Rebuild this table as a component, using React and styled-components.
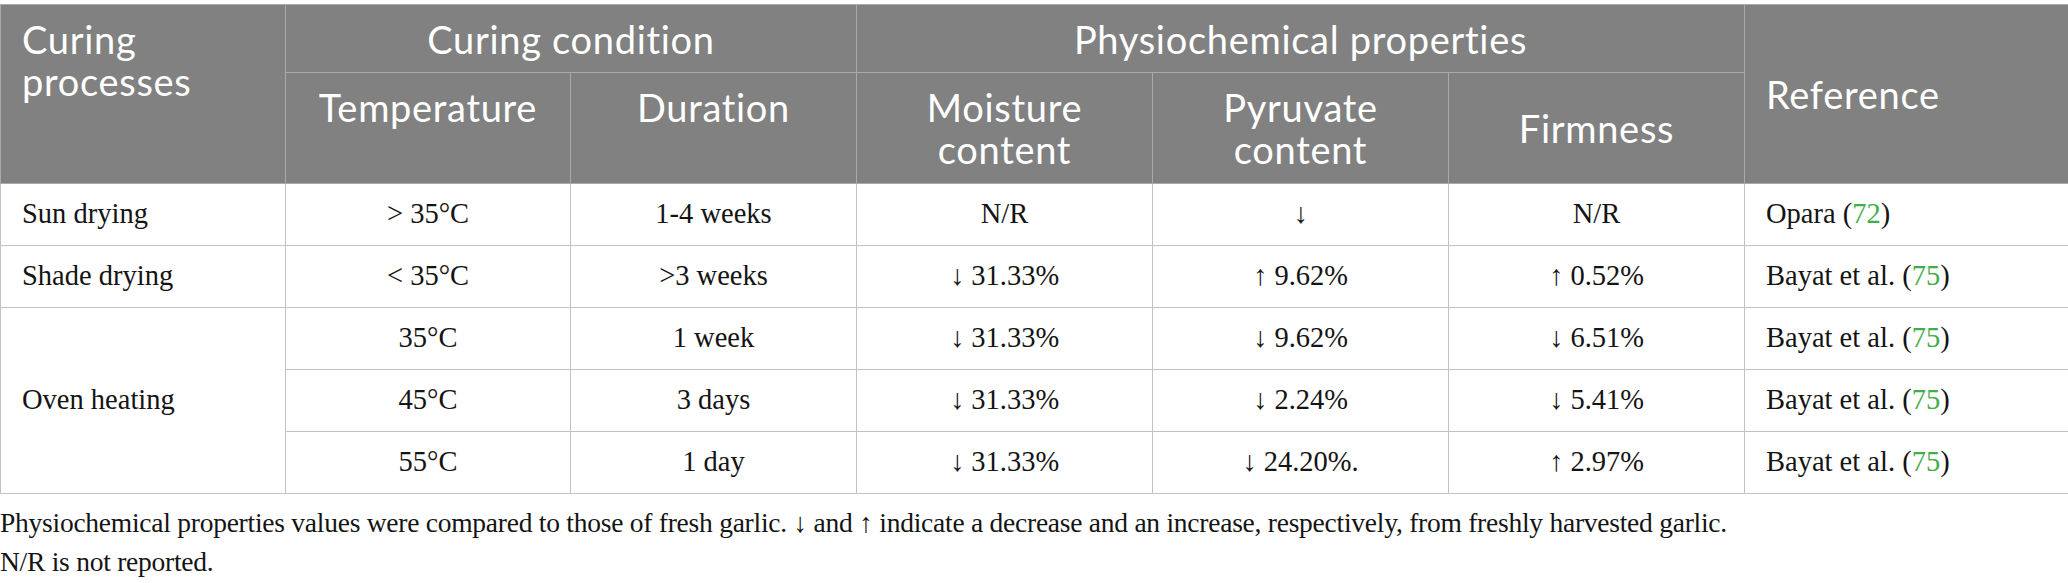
import React from "react";
import styled, { createGlobalStyle } from "styled-components";

const Global = createGlobalStyle`
  html, body { margin: 0; padding: 0; background: #ffffff; }
  body { width: 2068px; }
`;

const Page = styled.div`
  padding-top: 4px;
  width: 2068px;
`;

const Table = styled.table`
  width: 2068px;
  border-collapse: collapse;
  table-layout: fixed;
`;

const Col = styled.col`
  width: ${(p) => p.$w}px;
`;

const HeadCell = styled.th`
  background: #808180;
  color: #ffffff;
  font-family: Lato, "Open Sans", sans-serif;
  font-weight: 400;
  font-size: 38px;
  line-height: 42px;
  letter-spacing: 0.7px;
  border: 1px solid #a9aaa9;
  text-align: ${(p) => (p.$left ? "left" : "center")};
  vertical-align: ${(p) => (p.$mid ? "middle" : "top")};
  padding: ${(p) => (p.$mid ? "0" : "13px")} ${(p) => (p.$left ? "16px" : "8px")}
    ${(p) => (p.$mid ? "0" : "8px")} ${(p) => (p.$left ? "21px" : "8px")};
  box-sizing: border-box;
`;

const HeadRow = styled.tr`
  height: ${(p) => p.$h}px;
`;

const BodyRow = styled.tr`
  height: 62px;
`;

const Cell = styled.td`
  font-family: "Liberation Serif", "Times New Roman", serif;
  font-size: 28.5px;
  line-height: 36px;
  color: #141414;
  border: 1px solid #c2c2c2;
  text-align: ${(p) => (p.$left ? "left" : "center")};
  vertical-align: middle;
  padding: 0 ${(p) => (p.$left ? "10px" : "8px")} 2px
    ${(p) => (p.$left ? "21px" : "8px")};
  white-space: nowrap;
`;

const Ref = styled.span`
  color: #43ad4a;
`;

const Notes = styled.div`
  margin-top: 9px;
  font-family: "Liberation Serif", "Times New Roman", serif;
  font-size: 27.5px;
  letter-spacing: -0.25px;
  line-height: 39px;
  color: #141414;
`;

const NoteLine = styled.p`
  margin: 0;
`;

const widths = [285, 285, 286, 296, 296, 296, 324];

const rows = [
  { proc: "Sun drying", temp: "> 35°C", dur: "1-4 weeks", moist: "N/R", pyr: "↓", firm: "N/R", ref: "Opara", num: "72" },
  { proc: "Shade drying", temp: "< 35°C", dur: ">3 weeks", moist: "↓ 31.33%", pyr: "↑ 9.62%", firm: "↑ 0.52%", ref: "Bayat et al.", num: "75" },
  { proc: "Oven heating", span: 3, temp: "35°C", dur: "1 week", moist: "↓ 31.33%", pyr: "↓ 9.62%", firm: "↓ 6.51%", ref: "Bayat et al.", num: "75" },
  { temp: "45°C", dur: "3 days", moist: "↓ 31.33%", pyr: "↓ 2.24%", firm: "↓ 5.41%", ref: "Bayat et al.", num: "75" },
  { temp: "55°C", dur: "1 day", moist: "↓ 31.33%", pyr: "↓ 24.20%.", firm: "↑ 2.97%", ref: "Bayat et al.", num: "75" },
];

export default function App() {
  return (
    <Page>
      <Global />
      <Table>
        <colgroup>
          {widths.map((w, i) => (
            <Col key={i} $w={w} />
          ))}
        </colgroup>
        <thead>
          <HeadRow $h={68}>
            <HeadCell rowSpan={2} $left>
              Curing
              <br />
              processes
            </HeadCell>
            <HeadCell colSpan={2}>Curing condition</HeadCell>
            <HeadCell colSpan={3}>Physiochemical properties</HeadCell>
            <HeadCell rowSpan={2} $left $mid>
              Reference
            </HeadCell>
          </HeadRow>
          <HeadRow $h={111}>
            <HeadCell>Temperature</HeadCell>
            <HeadCell>Duration</HeadCell>
            <HeadCell>
              Moisture
              <br />
              content
            </HeadCell>
            <HeadCell>
              Pyruvate
              <br />
              content
            </HeadCell>
            <HeadCell $mid>Firmness</HeadCell>
          </HeadRow>
        </thead>
        <tbody>
          {rows.map((r, i) => (
            <BodyRow key={i}>
              {r.proc && (
                <Cell $left rowSpan={r.span || 1}>
                  {r.proc}
                </Cell>
              )}
              <Cell>{r.temp}</Cell>
              <Cell>{r.dur}</Cell>
              <Cell>{r.moist}</Cell>
              <Cell>{r.pyr}</Cell>
              <Cell>{r.firm}</Cell>
              <Cell $left>
                {r.ref} (<Ref>{r.num}</Ref>)
              </Cell>
            </BodyRow>
          ))}
        </tbody>
      </Table>
      <Notes>
        <NoteLine>
          Physiochemical properties values were compared to those of fresh garlic. ↓ and ↑ indicate a decrease and an increase, respectively, from freshly harvested garlic.
        </NoteLine>
        <NoteLine>N/R is not reported.</NoteLine>
      </Notes>
    </Page>
  );
}
